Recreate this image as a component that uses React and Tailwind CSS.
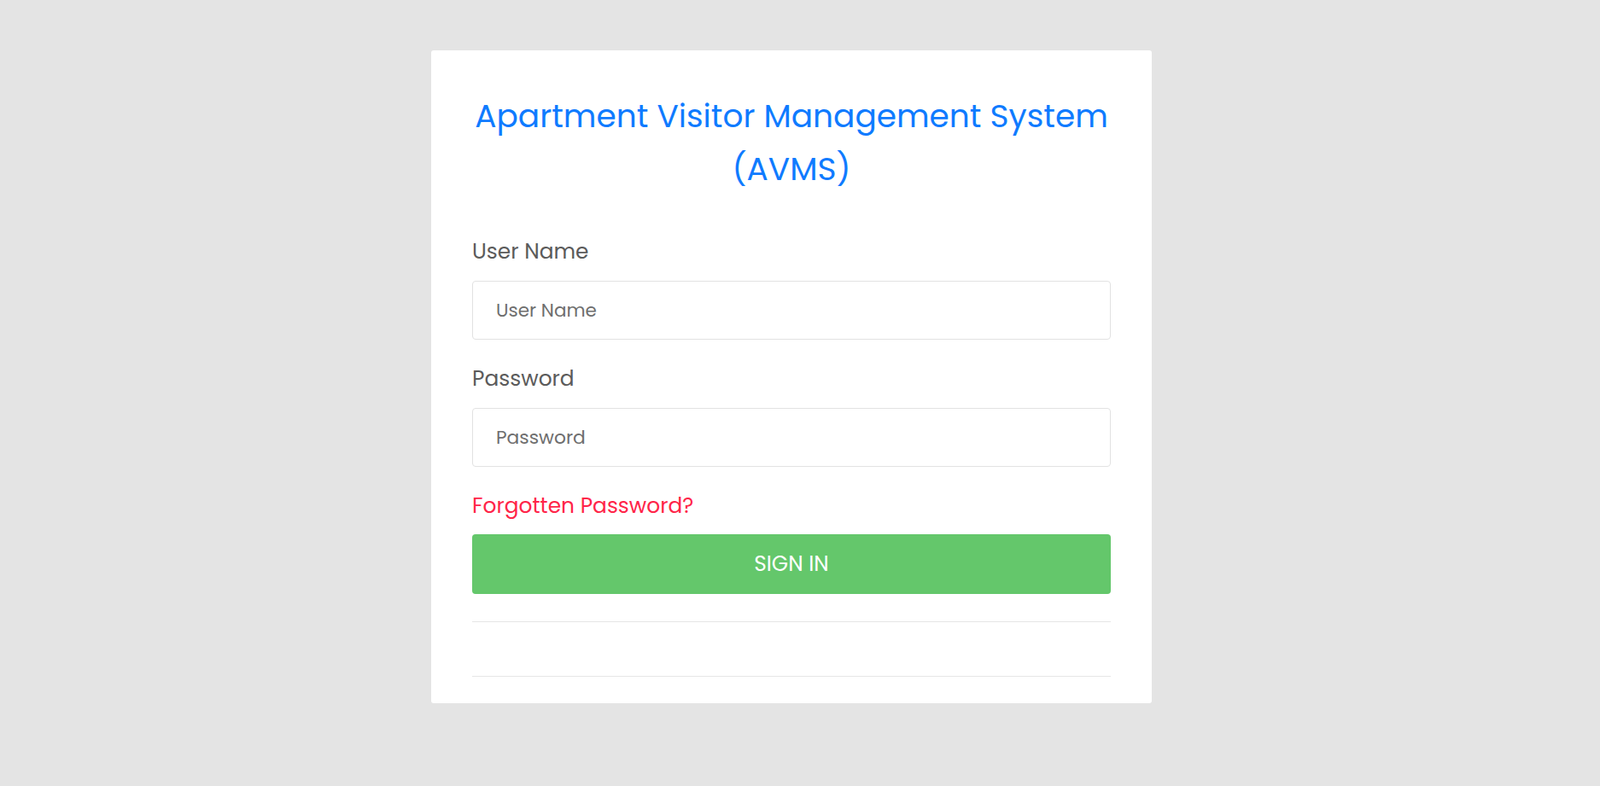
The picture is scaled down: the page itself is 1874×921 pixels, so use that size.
import React from 'react';

const font = { fontFamily: '"Poppins", "DejaVu Sans", sans-serif' };

export default function App() {
  return (
    <div className="min-h-[921px] w-full bg-[#e4e4e4]" style={font}>
      <div className="flex justify-center pt-[59px] pr-[20px] pb-[99px]">
        <div className="w-[844px] rounded-[3px] bg-white px-[48px] pt-[46px] pb-[31px]">
          <h3 className="text-center text-[37.5px] leading-[62px] font-normal text-[#0f7bff]">
            Apartment Visitor Management System (AVMS)
          </h3>

          <form className="mt-[48px]" onSubmit={(e) => e.preventDefault()}>
            <div>
              <label className="block h-[36px] text-[24.9px] leading-[36px] text-[#5b5b5b]">User Name</label>
              <input
                type="text"
                placeholder="User Name"
                className="mt-[16px] block h-[69px] w-full rounded-[4px] border border-[#e2e2e2] bg-white pl-[27px] text-[21.5px] text-[#555] outline-none placeholder:text-[#6e6e6e]"
              />
            </div>

            <div className="mt-[28px]">
              <label className="block h-[36px] text-[24.9px] leading-[36px] text-[#5b5b5b]">Password</label>
              <input
                type="password"
                placeholder="Password"
                className="mt-[16px] block h-[69px] w-full rounded-[4px] border border-[#e2e2e2] bg-white pl-[27px] text-[21.8px] text-[#555] outline-none placeholder:text-[#6e6e6e]"
              />
            </div>

            <div className="mt-[28px]">
              <a href="#" className="block h-[36px] text-[24.9px] leading-[36px] text-[#ff2448]">
                Forgotten Password?
              </a>
            </div>

            <button
              type="submit"
              className="mt-[15px] flex h-[70px] w-full items-center justify-center rounded-[4px] bg-[#64c76b] text-[24.8px] text-white"
            >
              SIGN IN
            </button>
          </form>

          <hr className="mt-[32px] border-0 border-t border-[#e6e6e6]" />
          <div className="h-[63px]" />
          <hr className="border-0 border-t border-[#e6e6e6]" />
        </div>
      </div>
    </div>
  );
}
